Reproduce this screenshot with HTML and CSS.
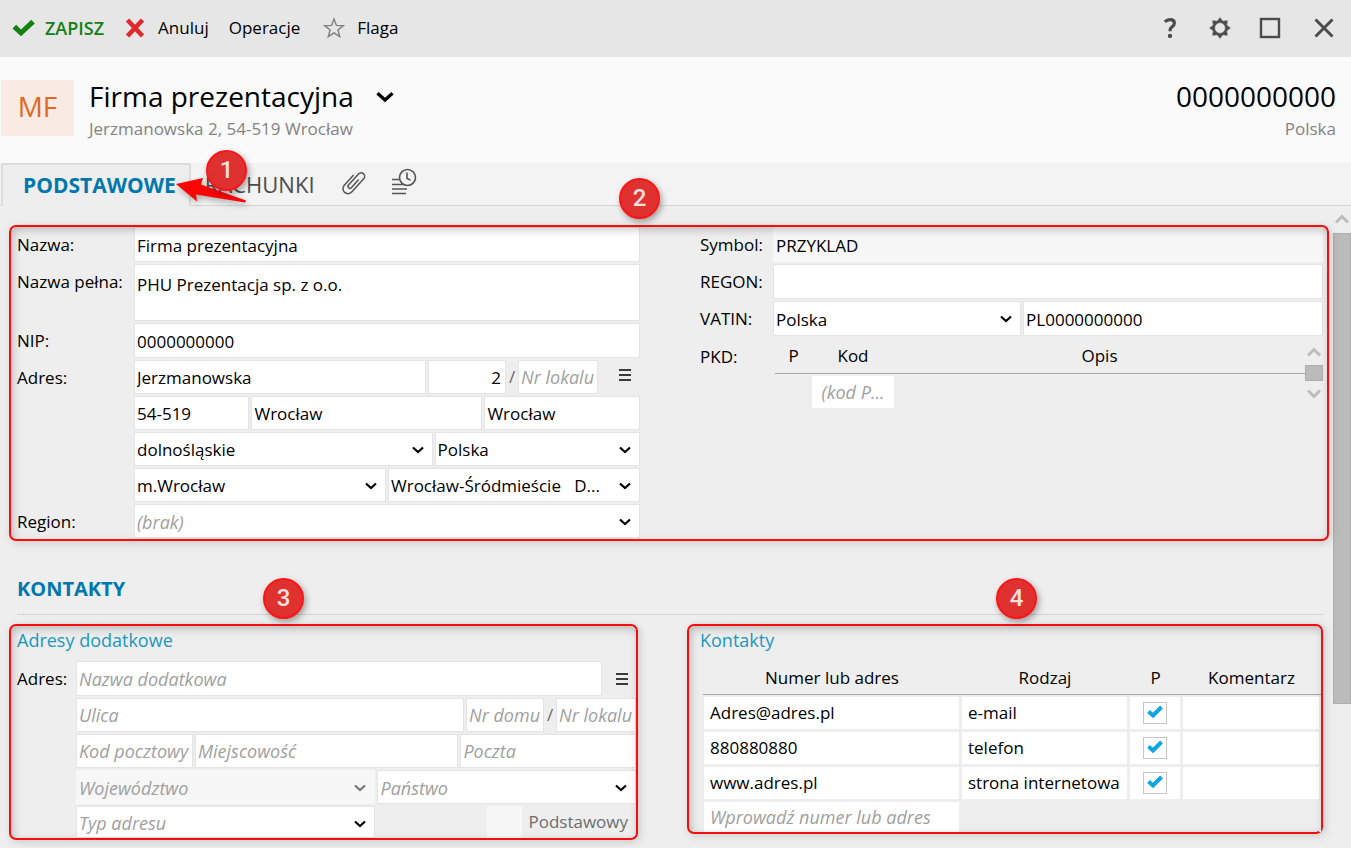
FILE: index.html
```
<!DOCTYPE html>
<html lang="pl">
<head>
    <meta charset="UTF-8">
    <meta name="viewport" content="width=device-width, initial-scale=1.0">
    <title>Firma prezentacyjna</title>
    <link rel="stylesheet" href="styles.css">
</head>
<body>
    <svg class="symbols" aria-hidden="true">
        <symbol id="chevron" viewBox="0 0 12 8">
            <path d="M1 1.5 L6 6 L11 1.5" fill="none" stroke="currentColor" stroke-width="2.2"/>
        </symbol>
        <symbol id="lines" viewBox="0 0 12 12">
            <path d="M0 1 H12 M0 6 H12 M0 11 H12" fill="none" stroke="currentColor" stroke-width="1.4"/>
        </symbol>
        <symbol id="arrow-up" viewBox="0 0 14 10">
            <path d="M1 8.5 L7 2.5 L13 8.5" fill="none" stroke="currentColor" stroke-width="3"/>
        </symbol>
    </svg>

    <!-- Toolbar -->
    <div class="toolbar">
        <button class="tool save" type="button">
            <svg width="24" height="18" viewBox="0 0 24 18"><path d="M0.5 9.5 L4.2 5.8 L9 10.4 L19.3 0.8 L22.8 4.4 L9 17.2 Z" fill="#128012"/></svg>
            ZAPISZ
        </button>
        <button class="tool cancel" type="button">
            <svg width="22" height="20" viewBox="0 0 22 20"><path d="M3.5 2 L18.500 18 M18.500 2 L3.500 18" stroke="#e0282d" stroke-width="4.6" fill="none"/></svg>
            Anuluj
        </button>
        <button class="tool" type="button">Operacje</button>
        <button class="tool flag" type="button">
            <svg width="22" height="22" viewBox="0 0 22 22"><path d="M11 2 L13.4 8.4 L20.2 8.7 L14.9 12.9 L16.7 19.6 L11 15.8 L5.3 19.6 L7.1 12.9 L1.8 8.7 L8.6 8.4 Z" fill="none" stroke="#808080" stroke-width="1.4"/></svg>
            Flaga
        </button>
        <div class="window-buttons">
            <button type="button" aria-label="Pomoc"><svg width="22" height="22" viewBox="0 0 22 22"><path d="M5.800 4.800 Q8 2.600 11 2.600 Q15.400 2.600 15.400 6 Q15.400 8.200 13 9.800 Q11 11.200 11 14.300" fill="none" stroke="#4c4c4c" stroke-width="3.2"/><circle cx="11" cy="18.900" r="2.200" fill="#4c4c4c"/></svg></button>
            <button type="button" aria-label="Ustawienia"><svg width="22" height="22" viewBox="0 0 22 22"><path d="M11 0.7 L13.75 4.35 L18.3 3.7 L17.65 8.25 L21.3 11 L17.65 13.75 L18.3 18.3 L13.75 17.65 L11 21.3 L8.25 17.65 L3.7 18.3 L4.35 13.75 L0.7 11 L4.35 8.25 L3.7 3.7 L8.25 4.35 Z M11 5.6 A5.4 5.4 0 1 0 11 16.4 A5.4 5.4 0 1 0 11 5.6 Z" fill="#4c4c4c" fill-rule="evenodd" stroke="#4c4c4c" stroke-width="0.6"/></svg></button>
            <button type="button" aria-label="Maksymalizuj"><svg width="22" height="22" viewBox="0 0 22 22"><rect x="2" y="2" width="18" height="18" fill="none" stroke="#4c4c4c" stroke-width="2.4"/></svg></button>
            <button class="close" type="button" aria-label="Zamknij"><svg width="22" height="22" viewBox="0 0 22 22"><path d="M2.5 2.5 L19.5 19.5 M19.5 2.5 L2.5 19.5" fill="none" stroke="#4c4c4c" stroke-width="3"/></svg></button>
        </div>
    </div>

    <!-- Company header -->
    <header class="company">
        <div class="initials">MF</div>
        <div class="company-name">
            <h1>Firma prezentacyjna <svg width="18" height="12"><use href="#chevron"/></svg></h1>
            <p>Jerzmanowska 2, 54-519 Wrocław</p>
        </div>
        <div class="company-nip">
            <strong>0000000000</strong>
            <p>Polska</p>
        </div>
    </header>

    <!-- Tabs -->
    <nav class="tabs">
        <a class="tab active" href="#podstawowe">PODSTAWOWE</a>
        <a class="tab" href="#rachunki">RACHUNKI</a>
        <a class="tab icon" href="#zalaczniki" aria-label="Załączniki">
            <svg width="26" height="28" viewBox="0 0 26 28"><path transform="translate(13 14) rotate(42)" d="M1.8 -5 V6 A1.9 1.9 0 0 1 -2 6 V-9 A3.5 3.5 0 0 1 5 -9 V9 A5 5 0 0 1 -5 9 V-5" fill="none" stroke="#555" stroke-width="1.5"/></svg>
        </a>
        <a class="tab icon" href="#historia" aria-label="Historia">
            <svg width="26" height="28" viewBox="0 0 26 28"><g fill="none" stroke="#555" stroke-width="1.6"><circle cx="16.5" cy="9.5" r="8"/><path d="M16 4.5 V10.5 L19.5 12"/><path d="M1 11.500 H8 M1 16.500 H12 M1 21 H16 M1 25.500 H15"/></g></svg>
        </a>
        <svg class="arrow" width="74" height="34" viewBox="0 0 74 34"><path d="M2 14 L29 8 L27 14.5 L72 30.5 L71 32.5 L22 24.5 L23 31.5 Z" fill="#fe0303"/></svg>
        <span class="badge badge-1">1</span>
    </nav>

    <div class="content">
        <main>
            <section class="frame basic" id="podstawowe">
                <span class="badge badge-2">2</span>
                <div class="form">
                    <div class="row tall">
                        <label for="nazwa">Nazwa:</label>
                        <input type="text" id="nazwa" value="Firma prezentacyjna">
                    </div>
                    <div class="row full-name">
                        <label for="nazwaPelna">Nazwa pełna:</label>
                        <textarea id="nazwaPelna">PHU Prezentacja sp. z o.o.</textarea>
                    </div>
                    <div class="row tall">
                        <label for="nip">NIP:</label>
                        <input type="text" id="nip" value="0000000000">
                    </div>
                    <div class="row">
                        <label for="ulica">Adres:</label>
                        <div class="fields street">
                            <input type="text" id="ulica" value="Jerzmanowska">
                            <input type="text" class="number" aria-label="Nr domu" value="2">
                            <span class="slash">/</span>
                            <input type="text" placeholder="Nr lokalu" aria-label="Nr lokalu">
                            <button class="menu" type="button" aria-label="Menu adresu"><svg width="12" height="12"><use href="#lines"/></svg></button>
                        </div>
                    </div>
                    <div class="row no-label">
                        <div class="fields city">
                            <input type="text" aria-label="Kod pocztowy" value="54-519">
                            <input type="text" aria-label="Miejscowość" value="Wrocław">
                            <input type="text" aria-label="Poczta" value="Wrocław">
                        </div>
                    </div>
                    <div class="row no-label">
                        <div class="fields state">
                            <div class="select">
                                <select aria-label="Województwo"><option>dolnośląskie</option></select>
                                <svg width="12" height="8"><use href="#chevron"/></svg>
                            </div>
                            <div class="select">
                                <select aria-label="Państwo"><option>Polska</option></select>
                                <svg width="12" height="8"><use href="#chevron"/></svg>
                            </div>
                        </div>
                    </div>
                    <div class="row no-label">
                        <div class="fields half">
                            <div class="select">
                                <select aria-label="Powiat"><option>m.Wrocław</option></select>
                                <svg width="12" height="8"><use href="#chevron"/></svg>
                            </div>
                            <div class="select">
                                <select aria-label="Gmina"><option>Wrocław-Śródmieście &nbsp; D...</option></select>
                                <svg width="12" height="8"><use href="#chevron"/></svg>
                            </div>
                        </div>
                    </div>
                    <div class="row">
                        <label for="region">Region:</label>
                        <div class="select">
                            <select class="empty" id="region"><option>(brak)</option></select>
                            <svg width="12" height="8"><use href="#chevron"/></svg>
                        </div>
                    </div>
                </div>

                <div class="form form-right">
                    <div class="row tall">
                        <label for="symbol">Symbol:</label>
                        <input type="text" class="readonly" id="symbol" value="PRZYKLAD" readonly>
                    </div>
                    <div class="row tall">
                        <label for="regon">REGON:</label>
                        <input type="text" id="regon">
                    </div>
                    <div class="row tall">
                        <label for="vatin">VATIN:</label>
                        <div class="fields vatin">
                            <div class="select">
                                <select aria-label="Kraj VATIN"><option>Polska</option></select>
                                <svg width="12" height="8"><use href="#chevron"/></svg>
                            </div>
                            <input type="text" id="vatin" value="PL0000000000">
                        </div>
                    </div>
                    <div class="row pkd">
                        <span class="label">PKD:</span>
                        <div class="pkd-box">
                            <table class="pkd-table">
                                <thead>
                                    <tr>
                                        <th class="col-p">P</th>
                                        <th class="col-kod">Kod</th>
                                        <th>Opis</th>
                                    </tr>
                                </thead>
                                <tbody>
                                    <tr>
                                        <td></td>
                                        <td class="code">(kod P...</td>
                                        <td></td>
                                    </tr>
                                </tbody>
                            </table>
                            <div class="mini-scroll">
                                <svg width="14" height="10"><use href="#arrow-up"/></svg>
                                <span></span>
                                <svg class="down" width="14" height="10"><use href="#arrow-up"/></svg>
                            </div>
                        </div>
                    </div>
                </div>
            </section>

            <h2>KONTAKTY</h2>

            <div class="contacts">
                <section class="frame addresses">
                    <span class="badge badge-3">3</span>
                    <h3>Adresy dodatkowe</h3>
                    <div class="form form-short">
                        <div class="row tall">
                            <label for="nazwaDodatkowa">Adres:</label>
                            <div class="fields extra-name">
                                <input type="text" id="nazwaDodatkowa" placeholder="Nazwa dodatkowa">
                                <button class="menu" type="button" aria-label="Menu adresu"><svg width="12" height="12"><use href="#lines"/></svg></button>
                            </div>
                        </div>
                        <div class="row no-label">
                            <div class="fields extra-street">
                                <input type="text" placeholder="Ulica" aria-label="Ulica">
                                <input type="text" placeholder="Nr domu" aria-label="Nr domu">
                                <span class="slash">/</span>
                                <input type="text" placeholder="Nr lokalu" aria-label="Nr lokalu">
                            </div>
                        </div>
                        <div class="row no-label">
                            <div class="fields extra-city">
                                <input type="text" placeholder="Kod pocztowy" aria-label="Kod pocztowy">
                                <input type="text" placeholder="Miejscowość" aria-label="Miejscowość">
                                <input type="text" placeholder="Poczta" aria-label="Poczta">
                            </div>
                        </div>
                        <div class="row no-label">
                            <div class="fields extra-state">
                                <div class="select disabled">
                                    <select class="empty" aria-label="Województwo" disabled><option>Województwo</option></select>
                                    <svg width="12" height="8"><use href="#chevron"/></svg>
                                </div>
                                <div class="select">
                                    <select class="empty" aria-label="Państwo"><option>Państwo</option></select>
                                    <svg width="12" height="8"><use href="#chevron"/></svg>
                                </div>
                            </div>
                        </div>
                        <div class="row last no-label">
                            <div class="fields extra-state">
                                <div class="select">
                                    <select class="empty" aria-label="Typ adresu"><option>Typ adresu</option></select>
                                    <svg width="12" height="8"><use href="#chevron"/></svg>
                                </div>
                                <label class="primary"><input type="checkbox" disabled>Podstawowy</label>
                            </div>
                        </div>
                    </div>
                </section>

                <section class="frame contact-list">
                    <span class="badge badge-4">4</span>
                    <h3>Kontakty</h3>
                    <table class="contact-table">
                        <thead>
                            <tr>
                                <th class="col-number">Numer lub adres</th>
                                <th class="col-type">Rodzaj</th>
                                <th class="col-check">P</th>
                                <th>Komentarz</th>
                            </tr>
                        </thead>
                        <tbody>
                            <tr>
                                <td>Adres@adres.pl</td>
                                <td>e-mail</td>
                                <td class="check"><label><input type="checkbox" aria-label="Podstawowy e-mail" checked><svg width="18" height="16" viewBox="0 0 18 16"><path d="M2.5 7.5 L7 11.5 L15.5 3" fill="none" stroke="#0ca7e2" stroke-width="4"/></svg></label></td>
                                <td></td>
                            </tr>
                            <tr>
                                <td>880880880</td>
                                <td>telefon</td>
                                <td class="check"><label><input type="checkbox" aria-label="Podstawowy telefon" checked><svg width="18" height="16" viewBox="0 0 18 16"><path d="M2.5 7.5 L7 11.5 L15.5 3" fill="none" stroke="#0ca7e2" stroke-width="4"/></svg></label></td>
                                <td></td>
                            </tr>
                            <tr>
                                <td>www.adres.pl</td>
                                <td>strona internetowa</td>
                                <td class="check"><label><input type="checkbox" aria-label="Podstawowa strona" checked><svg width="18" height="16" viewBox="0 0 18 16"><path d="M2.5 7.5 L7 11.5 L15.5 3" fill="none" stroke="#0ca7e2" stroke-width="4"/></svg></label></td>
                                <td></td>
                            </tr>
                            <tr class="new">
                                <td><input type="text" placeholder="Wprowadź numer lub adres" aria-label="Numer lub adres"></td>
                                <td></td>
                                <td></td>
                                <td></td>
                            </tr>
                        </tbody>
                    </table>
                </section>
            </div>
        </main>
        <div class="scrollbar">
            <svg width="14" height="10"><use href="#arrow-up"/></svg>
            <span></span>
        </div>
    </div>
</body>
</html>
```

FILE: styles.css
```
* {
    box-sizing: border-box;
}

body {
    margin: 0;
    height: 100vh;
    display: flex;
    flex-direction: column;
    overflow: hidden;
    background-color: #eee;
    color: #000;
    font-family: "Open Sans", "Noto Sans", sans-serif;
    font-size: 17px;
    line-height: 24px;
}

button,
input,
select,
textarea {
    font: inherit;
    color: inherit;
}

button {
    border: none;
    padding: 0;
    background: none;
    cursor: pointer;
}

h1,
h2,
h3,
p {
    margin: 0;
    font-weight: normal;
}

.symbols {
    position: absolute;
    width: 0;
    height: 0;
}

/* toolbar */
.toolbar {
    flex: none;
    display: flex;
    align-items: center;
    height: 57px;
    padding: 0 16px 2px 12px;
    background-color: #e6e6e6;
}

.tool {
    display: flex;
    align-items: center;
    margin-right: 20px;
}

.save {
    gap: 9px;
    color: #128012;
    font-size: 18px;
    font-weight: 600;
}

.cancel {
    gap: 12px;
}

.flag {
    gap: 12px;
    margin-left: 3px;
}

.window-buttons {
    display: flex;
    gap: 28px;
    margin-left: auto;
}

.window-buttons button {
    display: flex;
}

.window-buttons .close {
    margin-left: 4px;
}

/* company header */
.company {
    flex: none;
    display: flex;
    align-items: flex-start;
    height: 106px;
    padding: 20px 15px 0 1px;
    background-color: #fafafa;
}

.initials {
    width: 73px;
    height: 56px;
    margin-top: 3px;
    margin-right: 15px;
    background-color: #f9ebe3;
    color: #e06a1f;
    font-size: 28px;
    font-weight: 500;
    line-height: 52px;
    text-align: center;
}

.company h1,
.company strong {
    display: block;
    font-size: 28px;
    font-weight: normal;
    line-height: 38px;
}

.company h1 svg {
    margin-left: 15px;
    vertical-align: 4px;
}

.company p {
    padding-top: 2px;
    color: #838383;
}

.company-nip {
    margin-left: auto;
    text-align: right;
}

/* tabs */
.tabs {
    flex: none;
    position: relative;
    display: flex;
    height: 43px;
    border-bottom: 1px solid #d6d6d6;
    background-color: #f3f3f3;
}

.tab {
    display: flex;
    align-items: center;
    padding: 0 14px;
    color: #4c4c4c;
    font-size: 22px;
    text-decoration: none;
}

.tab.active {
    height: 43px;
    margin-left: 1px;
    padding: 0 13px 2px 20px;
    border: 2px solid #dcdcdc;
    border-bottom: none;
    background-color: #eee;
    color: #0078ad;
    font-size: 21px;
    font-weight: bold;
}

.tab.icon {
    padding: 0 12px 4px;
}

.arrow {
    position: absolute;
    left: 174px;
    top: 7px;
    filter: drop-shadow(2px 3px 3px rgba(0, 0, 0, 0.3));
}

/* numbered markers */
.badge {
    position: absolute;
    z-index: 2;
    width: 41px;
    height: 41px;
    border: 2px solid #fe1414;
    border-radius: 50%;
    background-color: #e03131;
    box-shadow: 2px 3px 6px rgba(0, 0, 0, 0.35);
    color: #fde0e0;
    font-family: Roboto, sans-serif;
    font-size: 24px;
    font-weight: 500;
    line-height: 37px;
    text-align: center;
}

.badge-1 {
    left: 206px;
    top: -13px;
}

.badge-2 {
    left: 608px;
    top: -49px;
}

.badge-3 {
    left: 252px;
    top: -48px;
}

.badge-4 {
    left: 307px;
    top: -48px;
}

/* scrolled area */
.content {
    flex: 1;
    display: flex;
    min-height: 0;
}

main {
    flex: 1;
    min-width: 0;
    padding: 19px 0 0 9px;
}

.scrollbar {
    display: flex;
    flex-direction: column;
    align-items: center;
    width: 18px;
    padding-top: 8px;
    color: #bcbcbc;
}

.scrollbar span {
    width: 18px;
    height: 471px;
    margin-top: 9px;
    border: 1px solid #adadad;
    background-color: #bbb;
}

/* red frames */
.frame {
    position: relative;
    border: 2px solid #f80c0c;
    border-radius: 7px;
    box-shadow: 2px 2px 8px rgba(0, 0, 0, 0.15);
}

.frame::after {
    content: "";
    position: absolute;
    inset: 0;
    border-radius: 5px;
    box-shadow: inset 2px 3px 8px rgba(0, 0, 0, 0.22);
    pointer-events: none;
}

.basic {
    display: grid;
    grid-template-columns: 1fr 1fr;
    column-gap: 60px;
    margin-right: 4px;
    padding: 0 4px 1px 6px;
}

/* forms */
.form {
    display: flex;
    flex-direction: column;
    gap: 2px;
}

.row {
    display: grid;
    grid-template-columns: 117px 1fr;
    grid-template-rows: 100%;
    height: 34px;
    line-height: 34px;
}

.row > label,
.row > .label {
    padding-top: 1px;
}

.form-right .row {
    grid-template-columns: 73px 1fr;
}

.form-short .row {
    grid-template-columns: 59px 1fr;
}

.row.tall {
    height: 35px;
}

.row.full-name {
    height: 57px;
}

.row.last {
    height: 32px;
    line-height: 32px;
}

.form-right .row.pkd {
    grid-template-rows: auto;
    height: auto;
    padding-top: 1px;
}

.no-label > * {
    grid-column: 2;
}

.fields {
    display: grid;
    grid-template-rows: 100%;
    column-gap: 2px;
    min-height: 0;
}

.street {
    grid-template-columns: 1fr 78px 8px 80px 40px;
}

.city {
    grid-template-columns: 115fr 230fr 155fr;
}

.state {
    grid-template-columns: 298fr 205fr;
}

.half {
    grid-template-columns: 1fr 1fr;
}

.vatin {
    grid-template-columns: 249fr 301fr;
}

.extra-name {
    grid-template-columns: 1fr 32px;
}

.extra-street {
    grid-template-columns: 1fr 78px 8px 80px;
}

.extra-city {
    grid-template-columns: 117px 264fr 176fr;
}

.extra-state {
    grid-template-columns: 300fr 259fr;
}

input[type="text"],
textarea,
select {
    display: block;
    width: 100%;
    min-width: 0;
    height: 100%;
    padding: 0 2px;
    border: 1px solid #e4e4e4;
    border-radius: 0;
    outline: none;
    background-color: #fff;
}

.tall input[type="text"],
.tall select {
    padding-top: 1px;
}

textarea {
    padding-top: 8px;
    line-height: 24px;
    resize: none;
}

input[type="text"].readonly {
    border-color: #f7f7f7;
    background-color: #f7f7f7;
}

input[type="text"].number {
    padding-right: 4px;
    text-align: right;
}

::placeholder {
    color: #a0a0a0;
    font-size: 18px;
    font-style: italic;
    opacity: 1;
}

input:placeholder-shown {
    font-size: 18px;
}

select {
    appearance: none;
}

select.empty {
    color: #a0a0a0;
    font-size: 18px;
    font-style: italic;
}

.select {
    position: relative;
    height: 100%;
    min-width: 0;
}

.select svg {
    position: absolute;
    right: 9px;
    top: 14px;
    pointer-events: none;
}

.select.disabled {
    color: #777;
}

.select.disabled select {
    border-color: #f7f7f7;
    background-color: #f7f7f7;
    opacity: 1;
}

.slash {
    color: #666;
    text-align: center;
}

.menu {
    display: flex;
    align-items: center;
    justify-content: center;
    padding-left: 10px;
}

.street .menu {
    padding-bottom: 4px;
}

.extra-name .menu {
    padding-left: 4px;
}

/* PKD */
.pkd-box {
    display: flex;
    padding-left: 2px;
}

.pkd-table {
    flex: 1;
    table-layout: fixed;
    border-spacing: 0;
}

th {
    padding: 0;
    border-bottom: 1px solid #a6a6a6;
    font-weight: normal;
    text-align: center;
}

.col-p {
    width: 37px;
}

.col-kod {
    width: 82px;
}

.pkd-table td {
    height: 34px;
    padding: 0;
}

.pkd-table .code {
    border-top: 2px solid #eee;
    background-color: #fff;
    color: #a0a0a0;
    font-size: 18px;
    font-style: italic;
    line-height: 32px;
    text-align: center;
}

.mini-scroll {
    display: flex;
    flex-direction: column;
    align-items: center;
    width: 18px;
    padding-top: 8px;
    color: #bcbcbc;
}

.mini-scroll span {
    width: 18px;
    height: 16px;
    margin: 8px 0;
    border: 1px solid #adadad;
    background-color: #bbb;
}

.down {
    transform: rotate(180deg);
}

/* contacts */
h2 {
    margin: 29px 10px 9px 8px;
    padding-bottom: 6px;
    border-bottom: 1px solid #d3d3d3;
    color: #0078ad;
    font-size: 20px;
    font-weight: bold;
    line-height: 38px;
}

.contacts {
    display: grid;
    grid-template-columns: 629fr 636fr;
    column-gap: 49px;
    align-items: start;
    margin-right: 10px;
}

h3 {
    color: #1a98c0;
    font-size: 18px;
    line-height: 28px;
}

.addresses {
    padding: 0 0 0 6px;
}

.addresses .form {
    margin-top: 7px;
}

.contact-list {
    padding-left: 11px;
}

.primary {
    display: flex;
    align-items: center;
    justify-content: flex-end;
    gap: 6px;
    padding-right: 8px;
    color: #6d6d6d;
}

.primary input {
    appearance: none;
    width: 35px;
    height: 32px;
    margin: 0;
    background-color: #f7f7f7;
}

.contact-table {
    width: 100%;
    margin-left: 3px;
    padding-right: 3px;
    table-layout: fixed;
    border-spacing: 0;
}

.contact-table th {
    height: 41px;
    padding-top: 8px;
}

.col-number {
    width: 258px;
}

.col-type {
    width: 168px;
}

.col-check {
    width: 53px;
}

.contact-table td {
    height: 35px;
    padding: 0 6px;
    border: solid #eee;
    border-width: 2px 2px 1px 1px;
    background-color: #fff;
}

.contact-table .check {
    padding: 0;
}

.check label {
    position: relative;
    display: block;
    width: 24px;
    height: 22px;
    margin: 0 auto;
}

.check input {
    appearance: none;
    display: block;
    width: 24px;
    height: 22px;
    margin: 0;
    border: 1px solid #c6c6c6;
    background-color: #fff;
}

.check svg {
    position: absolute;
    left: 3px;
    top: 2px;
}

.check input:not(:checked) + svg {
    display: none;
}

.contact-table .new td {
    height: 32px;
    border-bottom: none;
    background-color: transparent;
}

.contact-table .new td:first-child {
    padding: 0 4px;
    background-color: #fff;
}

.new input[type="text"] {
    border: none;
    height: 28px;
}
```
